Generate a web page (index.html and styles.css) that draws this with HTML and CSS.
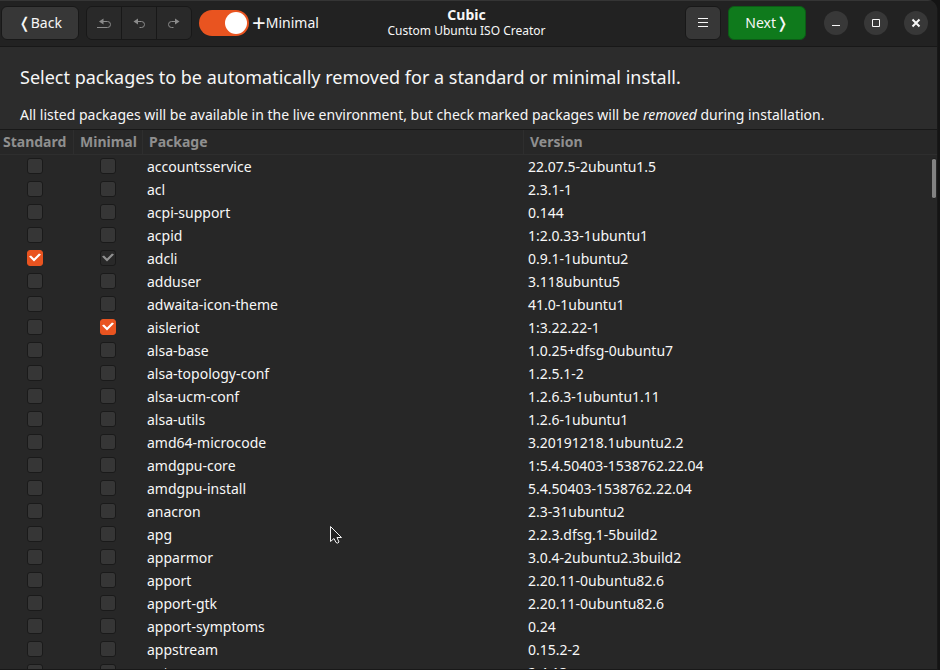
FILE: index.html
```html
<!DOCTYPE html>
<html lang="en">
<head>
<meta charset="utf-8">
<title>Cubic</title>
<link rel="stylesheet" href="styles.css">
</head>
<body>
<div class="window">
  <header class="bar">
    <div class="tools">
      <button class="btn back" type="button"><span class="angle">❬</span>Back</button>
      <div class="group">
        <button type="button" disabled aria-label="Revert all"><svg viewBox="0 0 16 16" width="16" height="16"><path d="M1 12.500h10.500a3 3 0 0 0 0-6H7"/><path class="tip" d="M7.500 3.500v6L3 6.500z"/></svg></button>
        <button type="button" disabled aria-label="Undo"><svg viewBox="0 0 16 16" width="16" height="16"><path d="M8.500 12.500h2a3 3 0 0 0 0-6H6"/><path class="tip" d="M7 3.500v6L2.500 6.500z"/></svg></button>
        <button type="button" disabled aria-label="Redo"><svg viewBox="0 0 16 16" width="16" height="16"><path d="M7.500 12.500h-2a3 3 0 0 1 0-6H10"/><path class="tip" d="M9 3.500v6l4.500-3z"/></svg></button>
      </div>
      <label class="toggle"><input class="switch" type="checkbox" checked><span class="plus">+</span>Minimal</label>
    </div>
    <div class="title"><h1>Cubic</h1><p>Custom Ubuntu ISO Creator</p></div>
    <div class="tools end">
      <button class="btn menu" type="button" aria-label="Menu"><svg viewBox="0 0 16 16" width="16" height="16"><path d="M3 3.500h10M3 7.500h10M3 11.500h10"/></svg></button>
      <button class="btn next" type="button">Next<span class="angle">❭</span></button>
      <div class="controls">
        <button type="button" aria-label="Minimize"><svg viewBox="0 0 16 16" width="16" height="16"><path d="M4 10.500h8"/></svg></button>
        <button type="button" aria-label="Maximize"><svg viewBox="0 0 16 16" width="16" height="16"><path d="M4.500 4.500h7v7h-7z"/></svg></button>
        <button class="close" type="button" aria-label="Close"><svg viewBox="0 0 16 16" width="16" height="16"><path d="M4.500 4.500l7 7M11.500 4.500l-7 7"/></svg></button>
      </div>
    </div>
  </header>
  <section class="intro">
    <h2>Select packages to be automatically removed for a standard or minimal install.</h2>
    <p>All listed packages will be available in the live environment, but check marked packages will be <em>removed</em> during installation.</p>
  </section>
  <main class="list">
    <table>
      <colgroup><col class="c-std"><col class="c-min"><col class="c-pkg"><col></colgroup>
      <thead><tr><th>Standard</th><th>Minimal</th><th>Package</th><th>Version</th></tr></thead>
      <tbody>
        <tr><td><input type="checkbox" aria-label="Standard: accountsservice"></td><td><input type="checkbox" aria-label="Minimal: accountsservice"></td><td>accountsservice</td><td>22.07.5-2ubuntu1.5</td></tr>
        <tr><td><input type="checkbox" aria-label="Standard: acl"></td><td><input type="checkbox" aria-label="Minimal: acl"></td><td>acl</td><td>2.3.1-1</td></tr>
        <tr><td><input type="checkbox" aria-label="Standard: acpi-support"></td><td><input type="checkbox" aria-label="Minimal: acpi-support"></td><td>acpi-support</td><td>0.144</td></tr>
        <tr><td><input type="checkbox" aria-label="Standard: acpid"></td><td><input type="checkbox" aria-label="Minimal: acpid"></td><td>acpid</td><td>1:2.0.33-1ubuntu1</td></tr>
        <tr><td><input type="checkbox" checked aria-label="Standard: adcli"></td><td><input type="checkbox" checked disabled aria-label="Minimal: adcli"></td><td>adcli</td><td>0.9.1-1ubuntu2</td></tr>
        <tr><td><input type="checkbox" aria-label="Standard: adduser"></td><td><input type="checkbox" aria-label="Minimal: adduser"></td><td>adduser</td><td>3.118ubuntu5</td></tr>
        <tr><td><input type="checkbox" aria-label="Standard: adwaita-icon-theme"></td><td><input type="checkbox" aria-label="Minimal: adwaita-icon-theme"></td><td>adwaita-icon-theme</td><td>41.0-1ubuntu1</td></tr>
        <tr><td><input type="checkbox" aria-label="Standard: aisleriot"></td><td><input type="checkbox" checked aria-label="Minimal: aisleriot"></td><td>aisleriot</td><td>1:3.22.22-1</td></tr>
        <tr><td><input type="checkbox" aria-label="Standard: alsa-base"></td><td><input type="checkbox" aria-label="Minimal: alsa-base"></td><td>alsa-base</td><td>1.0.25+dfsg-0ubuntu7</td></tr>
        <tr><td><input type="checkbox" aria-label="Standard: alsa-topology-conf"></td><td><input type="checkbox" aria-label="Minimal: alsa-topology-conf"></td><td>alsa-topology-conf</td><td>1.2.5.1-2</td></tr>
        <tr><td><input type="checkbox" aria-label="Standard: alsa-ucm-conf"></td><td><input type="checkbox" aria-label="Minimal: alsa-ucm-conf"></td><td>alsa-ucm-conf</td><td>1.2.6.3-1ubuntu1.11</td></tr>
        <tr><td><input type="checkbox" aria-label="Standard: alsa-utils"></td><td><input type="checkbox" aria-label="Minimal: alsa-utils"></td><td>alsa-utils</td><td>1.2.6-1ubuntu1</td></tr>
        <tr><td><input type="checkbox" aria-label="Standard: amd64-microcode"></td><td><input type="checkbox" aria-label="Minimal: amd64-microcode"></td><td>amd64-microcode</td><td>3.20191218.1ubuntu2.2</td></tr>
        <tr><td><input type="checkbox" aria-label="Standard: amdgpu-core"></td><td><input type="checkbox" aria-label="Minimal: amdgpu-core"></td><td>amdgpu-core</td><td>1:5.4.50403-1538762.22.04</td></tr>
        <tr><td><input type="checkbox" aria-label="Standard: amdgpu-install"></td><td><input type="checkbox" aria-label="Minimal: amdgpu-install"></td><td>amdgpu-install</td><td>5.4.50403-1538762.22.04</td></tr>
        <tr><td><input type="checkbox" aria-label="Standard: anacron"></td><td><input type="checkbox" aria-label="Minimal: anacron"></td><td>anacron</td><td>2.3-31ubuntu2</td></tr>
        <tr><td><input type="checkbox" aria-label="Standard: apg"></td><td><input type="checkbox" aria-label="Minimal: apg"></td><td>apg</td><td>2.2.3.dfsg.1-5build2</td></tr>
        <tr><td><input type="checkbox" aria-label="Standard: apparmor"></td><td><input type="checkbox" aria-label="Minimal: apparmor"></td><td>apparmor</td><td>3.0.4-2ubuntu2.3build2</td></tr>
        <tr><td><input type="checkbox" aria-label="Standard: apport"></td><td><input type="checkbox" aria-label="Minimal: apport"></td><td>apport</td><td>2.20.11-0ubuntu82.6</td></tr>
        <tr><td><input type="checkbox" aria-label="Standard: apport-gtk"></td><td><input type="checkbox" aria-label="Minimal: apport-gtk"></td><td>apport-gtk</td><td>2.20.11-0ubuntu82.6</td></tr>
        <tr><td><input type="checkbox" aria-label="Standard: apport-symptoms"></td><td><input type="checkbox" aria-label="Minimal: apport-symptoms"></td><td>apport-symptoms</td><td>0.24</td></tr>
        <tr><td><input type="checkbox" aria-label="Standard: appstream"></td><td><input type="checkbox" aria-label="Minimal: appstream"></td><td>appstream</td><td>0.15.2-2</td></tr>
        <tr><td><input type="checkbox" aria-label="Standard: apt"></td><td><input type="checkbox" aria-label="Minimal: apt"></td><td>apt</td><td>2.4.13</td></tr>
      </tbody>
    </table>
    <div class="thumb"></div>
    <svg class="pointer" viewBox="0 0 14 20" width="14" height="20"><path d="M1.500 1.500v15l3.500-3 2 4q2 1.500 3-.5l-2-4.500h4.500z"/></svg>
  </main>
</div>
</body>
</html>
```

FILE: styles.css
```css
* { box-sizing: border-box; }
body {
  margin: 0;
  background: #141414;
  color: #f7f7f7;
  font: 14px/20px "Noto Sans", "Open Sans", sans-serif;
}
h1, h2, p { margin: 0; }
button { font: inherit; color: inherit; padding: 0; }
svg { display: block; fill: none; stroke: currentColor; }
.window {
  display: flex;
  flex-direction: column;
  height: 100vh;
  margin-right: 2px;
  border-right: 1px solid #181818;
  border-bottom: 1px solid #181818;
  border-radius: 0 10px 0 0;
  overflow: hidden;
  background: #2c2c2c;
}
.bar {
  display: grid;
  grid-template-columns: 1fr auto 1fr;
  align-items: center;
  height: 47px;
  padding: 0 5px 2px 1px;
  background: #222;
  border-top: 1px solid #353535;
  border-bottom: 1px solid #181818;
}
.tools { display: flex; align-items: center; gap: 7px; }
.end { justify-content: flex-end; padding-right: 4px; }
.btn {
  display: flex;
  align-items: center;
  justify-content: center;
  height: 34px;
  border: 1px solid #181818;
  border-radius: 6px;
  background: #373737;
}
.back, .next { width: 78px; }
.next { background: #0f7a1c; border-color: #0c5c16; }
.menu { width: 36px; }
.angle { font-family: "DejaVu Sans", sans-serif; font-size: 15px; }
.group {
  display: flex;
  height: 34px;
  border: 1px solid #181818;
  border-radius: 6px;
  overflow: hidden;
}
.group button {
  display: grid;
  place-items: center;
  width: 34px;
  border: 0;
  background: #292929;
  color: #8b8b8b;
}
.group button + button { width: 35px; border-left: 1px solid #181818; }
.tip { fill: currentColor; stroke: none; }
.toggle { display: flex; align-items: center; }
.switch {
  appearance: none;
  display: flex;
  justify-content: flex-end;
  width: 50px;
  height: 26px;
  margin: 0 3px 0 0;
  padding: 2px;
  border-radius: 13px;
  background: #e95420;
}
.switch::before {
  content: "";
  width: 22px;
  height: 22px;
  border-radius: 50%;
  background: #fff;
}
.plus { font-size: 24px; }
.title { text-align: center; }
.title h1 { font-size: 14px; line-height: 16px; }
.title p { font-size: 12px; line-height: 16px; }
.controls { display: flex; gap: 16px; margin-left: 11px; }
.controls button {
  display: grid;
  place-items: center;
  width: 24px;
  height: 24px;
  border: 0;
  border-radius: 50%;
  background: #383838;
}
.close path { stroke-width: 2; }
.intro { padding: 18px 20px 4px; }
.intro h2 { font-size: 18px; line-height: 24px; font-weight: 400; }
.intro p { margin-top: 16px; }
.list {
  position: relative;
  flex: 1;
  min-height: 0;
  overflow: hidden;
  background: #272727;
  border-top: 1px solid #181818;
}
table { width: 100%; table-layout: fixed; border-collapse: separate; border-spacing: 0; }
.c-std { width: 74px; }
.c-min { width: 69px; }
.c-pkg { width: 381px; }
th {
  height: 25px;
  padding: 0 6px;
  border-right: 1px solid #2e2e2e;
  border-bottom: 1px solid #2e2e2e;
  color: #8f8f8f;
  text-align: left;
}
th:last-child { border-right: 0; }
th:first-child { padding: 0 3px; }
td { height: 23px; padding: 0 4px; }
td:nth-child(-n+2) { padding: 0 1px 2px 0; }
td:first-child { padding-right: 4px; }
td input {
  appearance: none;
  display: block;
  width: 16px;
  height: 16px;
  margin: 0 auto;
  border: 1px solid #1a1a1a;
  border-radius: 3px;
  background: #363636;
}
td input:checked { background: #e95420; border-color: #e95420; color: #fff; }
td input:disabled { background: #292929; border-color: #1a1a1a; color: #919191; }
td input:checked::before {
  content: "";
  display: block;
  width: 14px;
  height: 14px;
  background: currentColor;
  clip-path: polygon(1px 6px, 3px 5px, 6px 8px, 11px 3px, 13px 4px, 6px 11px);
}
.thumb {
  position: absolute;
  top: 28px;
  right: 1px;
  width: 4px;
  height: 41px;
  border: 1px solid #181818;
  border-width: 1px 0;
  border-radius: 2px;
  background: #828282;
}
.pointer { position: absolute; left: 329px; top: 395px; fill: #222; stroke: #f2f2f2; }
```
